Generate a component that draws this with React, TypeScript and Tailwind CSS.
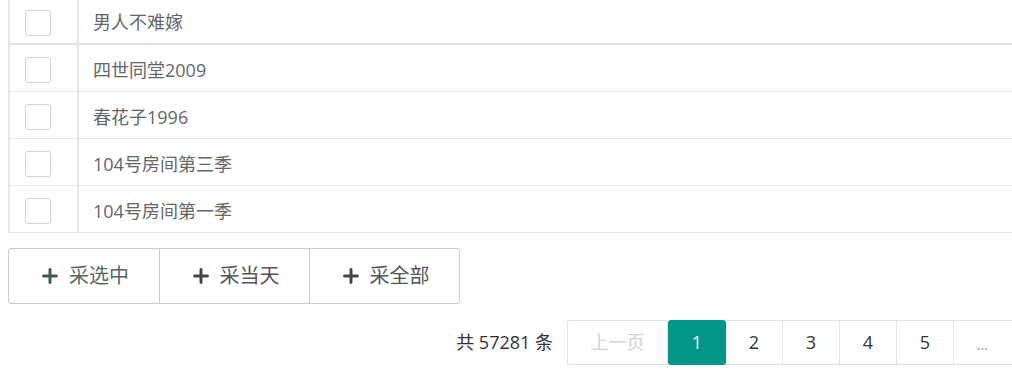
import { Plus } from "lucide-react";

const rows = ["男人不难嫁", "四世同堂2009", "春花子1996", "104号房间第三季", "104号房间第一季"];

const Row = ({ title, first }: { title: string; first?: boolean }) => (
  <div
    className={
      first
        ? "flex h-[47px] items-stretch border-b-2 border-[#e2e2e2]"
        : "flex h-[47px] items-stretch border-b border-[#e6e6e6]"
    }
  >
    <div className="flex w-[69px] items-center border-r-2 border-[#e6e6e6] pl-[15px] pt-[4px]">
      <span className="block h-[26px] w-[26px] rounded-[3px] border border-[#d2d2d2] bg-white" />
    </div>
    <div className="flex items-center pl-[14px] pt-[4px] text-[18px] text-[#666]">{title}</div>
  </div>
);

const Btn = ({ label, tint }: { label: string; tint?: boolean }) => (
  <button
    className={
      "flex h-full w-[150px] items-center justify-center gap-[8px] border-l border-[#c9c9c9] first:border-l-0 text-[20px] " +
      (tint ? "text-[#55695f]" : "text-[#555]")
    }
  >
    <Plus className={tint ? "h-[22px] w-[22px] text-[#3d5a50]" : "h-[22px] w-[22px] text-[#444]"} strokeWidth={3.2} />
    {label}
  </button>
);

const pages = ["2", "3", "4", "5"];

const App = () => {
  return (
    <div className="h-[384px] w-[1012px] overflow-hidden bg-white font-['Open_Sans','Noto_Sans_CJK_SC',sans-serif]">
      <div className="ml-[8px] -mt-[2px] w-[1004px]">
        <div className="border-l-2 border-[#e6e6e6]">
          {rows.map((r, i) => (
            <Row key={r} title={r} first={i === 0} />
          ))}
        </div>

        <div className="mt-[15px] flex h-[56px] w-[452px] overflow-hidden rounded-[3px] border border-[#c9c9c9]">
          <Btn label="采选中" tint />
          <Btn label="采当天" />
          <Btn label="采全部" />
        </div>

        <div className="mt-[16px] flex items-center justify-end">
          <span className="mr-[14px] text-[18px] text-[#333]">共 57281 条</span>
          <div className="flex h-[45px] text-[18px]">
            <span className="flex w-[101px] items-center justify-center rounded-l-[2px] border border-[#e2e2e2] text-[#d2d2d2]">
              上一页
            </span>
            <span className="flex w-[58px] items-center justify-center rounded-[3px] bg-[#009688] text-white">1</span>
            {pages.map((p) => (
              <span key={p} className="flex w-[57px] items-center justify-center border-y border-r border-[#e2e2e2] text-[#333]">
                {p}
              </span>
            ))}
            <span className="flex w-[58px] items-center justify-center border-y border-[#e2e2e2] pt-[4px] text-[14px] tracking-[1px] text-[#999]">
              …
            </span>
          </div>
        </div>
      </div>
    </div>
  );
};

export default App;
